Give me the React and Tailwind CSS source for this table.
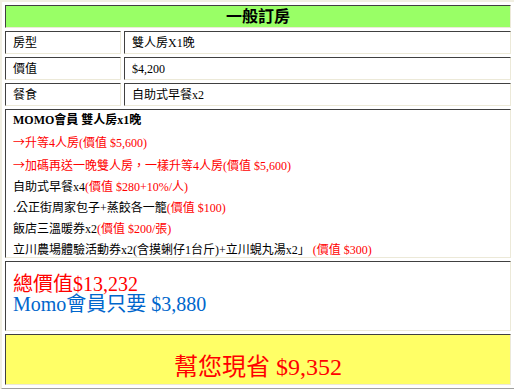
const font = { fontFamily: '"Liberation Serif", "Noto Sans CJK TC", serif' };

const cell = 'border-t border-l border-t-[#404040] border-l-[#404040] border-b border-r border-b-[#ece9d8] border-r-[#ece9d8]';

const rows = [
  ['房型', '雙人房X1晚'],
  ['價值', '$4,200'],
  ['餐食', '自助式早餐x2'],
];

const Row = ({ label, value }) => (
  <div className="flex gap-[3px] h-[23px]">
    <div className={`${cell} w-[116px] bg-white flex items-center pl-[7px] text-[12px] text-black`}>{label}</div>
    <div className={`${cell} flex-1 bg-white flex items-center pl-[7px] text-[12px] text-black`}>{value}</div>
  </div>
);

// full-width arrow like the reference
const Arrow = () => <span className="font-['Noto_Sans_CJK_TC',sans-serif]">→</span>;

export default function App() {
  return (
    <div className="w-[514px] h-[389px] overflow-hidden bg-white" style={font}>
      <div className="w-[516px] border-2 border-t-[#f1efe2] border-l-[#f1efe2] border-b-[#a0a0a0] border-r-[#a0a0a0] p-[3px] flex flex-col gap-[3px] bg-white">
        <div className={`${cell} h-[23px] bg-[#99ff66] flex items-center justify-center text-[16px] font-bold text-black`}>
          一般訂房
        </div>

        {rows.map(([label, value]) => (
          <Row key={label} label={label} value={value} />
        ))}

        <div className={`${cell} h-[149px] bg-white pl-[7px] text-[12px] leading-[21px] text-black`}>
          <p className="font-bold">MOMO會員 雙人房x1晚</p>
          <p className="text-[#ff0000]"><Arrow />升等4人房(價值 $5,600)</p>
          <p className="text-[#ff0000]"><Arrow />加碼再送一晚雙人房，一樣升等4人房(價值 $5,600)</p>
          <p>自助式早餐x4<span className="text-[#ff0000]">(價值 $280+10%/人)</span></p>
          <p>.公正街周家包子+蒸餃各一籠<span className="text-[#ff0000]">(價值 $100)</span></p>
          <p>飯店三溫暖券x2<span className="text-[#ff0000]">(價值 $200/張)</span></p>
          <p>立川農場體驗活動券x2(含摸蜊仔1台斤)+立川蜆丸湯x2」 <span className="text-[#ff0000]">(價值 $300)</span></p>
        </div>

        <div className={`${cell} h-[70px] bg-white pl-[7px] pt-[12px] text-[20px] leading-[20px]`}>
          <p className="text-[#ff0000]">總價值$13,232</p>
          <p className="text-[#0066cc]">Momo會員只要 $3,880</p>
        </div>

        <div className={`${cell} h-[51px] bg-[#ffff66] pt-[20px] text-center text-[24px] leading-[24px] text-[#ff0000]`}>
          幫您現省 $9,352
        </div>
      </div>
    </div>
  );
}
